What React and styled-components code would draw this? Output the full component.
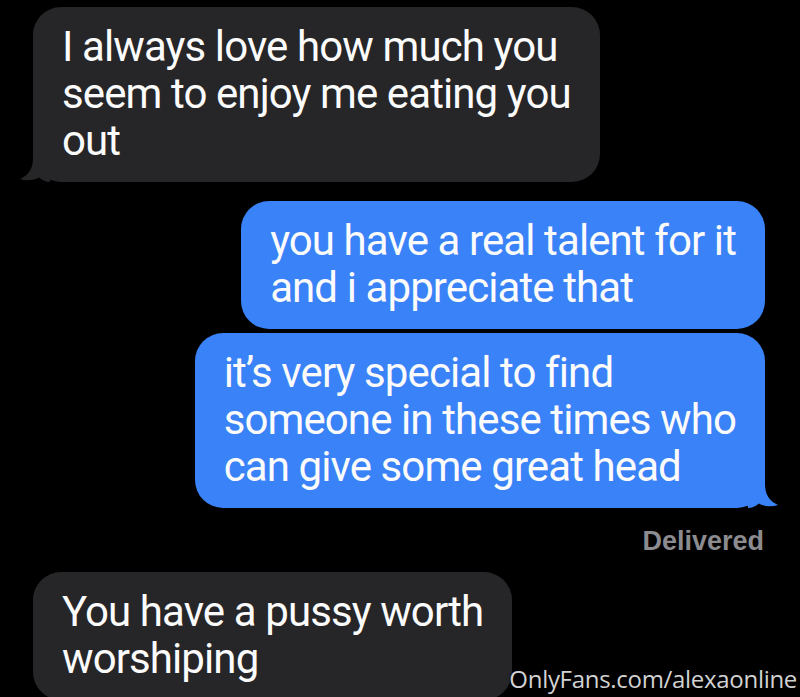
import React from "react";
import styled, { createGlobalStyle } from "styled-components";

const GlobalStyle = createGlobalStyle`
* {
  margin: 0;
  padding: 0;
  box-sizing: border-box;
}

body {
  background: #000000;
  color: #ffffff;
  font-family: Roboto, "Liberation Sans", sans-serif;
  overflow: hidden;
}
`;

const Thread = styled.div`
  position: relative;
  width: 800px;
  height: 697px;
  overflow: hidden;
  display: flex;
  flex-direction: column;
  padding-top: 7px;
`;

const Bubble = styled.div`
  position: relative;
  align-self: ${(p) => (p.$out ? "flex-end" : "flex-start")};
  margin: ${(p) => (p.$out ? "0 35px 0 0" : "0 0 0 33px")};
  margin-top: ${(p) => p.$gap || 0}px;
  background: ${(p) => (p.$out ? "#3a82f7" : "#262628")};
  border-radius: 28px;
  padding: 16px 29px 18px 29px;
  font-size: 42px;
  line-height: 47px;
  letter-spacing: -0.9px;
  white-space: nowrap;
  color: #fbfbfb;
`;

const TailSvg = styled.svg`
  position: absolute;
  bottom: 0;
  width: 30px;
  height: 30px;
  ${(p) =>
    p.$out
      ? "right: -13px;"
      : "left: -13px; transform: scaleX(-1);"}
`;

const Status = styled.div`
  align-self: flex-end;
  margin: 18px 36px 0 0;
  font-family: "Liberation Sans", Arial, sans-serif;
  font-weight: 700;
  font-size: 27px;
  line-height: 30px;
  color: #8b8b90;
`;

const Watermark = styled.div`
  position: absolute;
  right: 3px;
  bottom: 4px;
  font-family: "Open Sans", sans-serif;
  font-size: 24px;
  line-height: 28px;
  letter-spacing: -0.3px;
  color: #d2d2d2;
  text-shadow: 0 0 3px rgba(0, 0, 0, 0.8);
`;

const Tail = ({ out, color }) => (
  <TailSvg $out={out} viewBox="0 0 30 30">
    <path
      d="M0 0 H17 V6 C17 16 21 23 30 27 C24 29 16 28.5 11 25.5 C8 28 4 30 0 30 Z"
      fill={color}
    />
  </TailSvg>
);

const messages = [
  {
    out: false,
    gap: 0,
    tail: true,
    lines: ["I always love how much you", "seem to enjoy me eating you", "out"],
  },
  {
    out: true,
    gap: 19,
    tail: false,
    lines: ["you have a real talent for it", "and i appreciate that"],
  },
  {
    out: true,
    gap: 4,
    tail: true,
    lines: [
      "it\u2019s very special to find",
      "someone in these times who",
      "can give some great head",
    ],
  },
];

export default function App() {
  return (
    <>
      <GlobalStyle />
      <Thread>
        {messages.map((m, i) => (
          <Bubble key={i} $out={m.out} $gap={m.gap}>
            {m.lines.map((line, j) => (
              <div key={j}>{line}</div>
            ))}
            {m.tail && <Tail out={m.out} color={m.out ? "#3a82f7" : "#262628"} />}
          </Bubble>
        ))}
        <Status>Delivered</Status>
        <Bubble $gap={16}>
          <div>You have a pussy worth</div>
          <div>worshiping</div>
        </Bubble>
        <Watermark>OnlyFans.com/alexaonline</Watermark>
      </Thread>
    </>
  );
}
